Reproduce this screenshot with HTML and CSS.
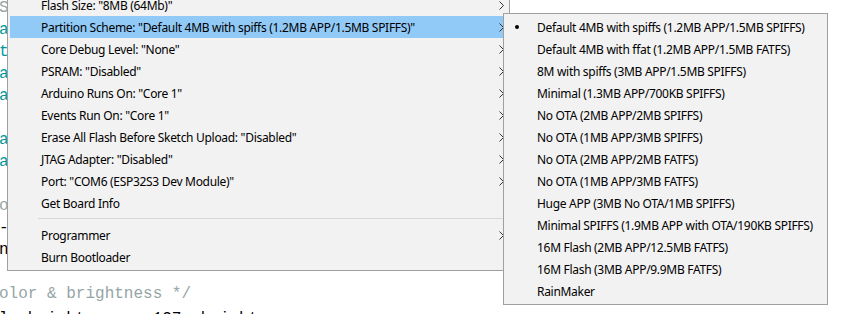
FILE: index.html
```html
<!DOCTYPE html>
<html lang="en">
<head>
  <meta charset="UTF-8" />
  <title>Tools menu - Partition Scheme</title>
  <link rel="stylesheet" href="styles.css">
</head>
<body>
  <!-- sketch editor behind the menus -->
  <div class="editor">
    <div class="ln"><span class="com"> Setup the RGB pins */</span></div>
    <div class="ln"><span class="kw"> analogWrite</span>(RED_PIN, 0);</div>
    <div class="ln"><span class="kw"> tone</span>(BUZZER, 440);</div>
    <div class="ln"><span class="kw"> analogWrite</span>(GREEN_PIN, 0);</div>
    <div class="ln"><span class="kw"> analogWrite</span>(BLUE_PIN, 0);</div>
    <div class="ln"></div>
    <div class="ln"><span class="kw"> analogWrite</span>(RED_PIN, 255);</div>
    <div class="ln"><span class="kw"> analogWrite</span>(GREEN_PIN, 255);</div>
    <div class="ln"></div>
    <div class="ln"><span class="com">color cycle */</span></div>
    <div class="ln">--counter;</div>
    <div class="ln"> n = 0;</div>
    <div class="ln"></div>
    <div class="ln"><span class="com">color &amp; brightness */</span></div>
    <div class="ln last"> l  brightness = 127; brightness</div>
  </div>

  <div class="menu main-menu">
    <div class="item"><span class="label">Flash Size: "8MB (64Mb)"</span><span class="arrow"></span></div>
    <div class="item active"><span class="label">Partition Scheme: "Default 4MB with spiffs (1.2MB APP/1.5MB SPIFFS)"</span><span class="arrow"></span></div>
    <div class="item"><span class="label">Core Debug Level: "None"</span><span class="arrow"></span></div>
    <div class="item"><span class="label">PSRAM: "Disabled"</span><span class="arrow"></span></div>
    <div class="item"><span class="label">Arduino Runs On: "Core 1"</span><span class="arrow"></span></div>
    <div class="item"><span class="label">Events Run On: "Core 1"</span><span class="arrow"></span></div>
    <div class="item"><span class="label">Erase All Flash Before Sketch Upload: "Disabled"</span><span class="arrow"></span></div>
    <div class="item"><span class="label">JTAG Adapter: "Disabled"</span><span class="arrow"></span></div>
    <div class="item"><span class="label">Port: "COM6 (ESP32S3 Dev Module)"</span><span class="arrow"></span></div>
    <div class="item"><span class="label">Get Board Info</span></div>
    <div class="sep"></div>
    <div class="item"><span class="label">Programmer</span><span class="arrow"></span></div>
    <div class="item"><span class="label">Burn Bootloader</span></div>
  </div>

  <div class="menu sub-menu">
    <div class="item checked">Default 4MB with spiffs (1.2MB APP/1.5MB SPIFFS)</div>
    <div class="item">Default 4MB with ffat (1.2MB APP/1.5MB FATFS)</div>
    <div class="item">8M with spiffs (3MB APP/1.5MB SPIFFS)</div>
    <div class="item">Minimal (1.3MB APP/700KB SPIFFS)</div>
    <div class="item">No OTA (2MB APP/2MB SPIFFS)</div>
    <div class="item">No OTA (1MB APP/3MB SPIFFS)</div>
    <div class="item">No OTA (2MB APP/2MB FATFS)</div>
    <div class="item">No OTA (1MB APP/3MB FATFS)</div>
    <div class="item">Huge APP (3MB No OTA/1MB SPIFFS)</div>
    <div class="item">Minimal SPIFFS (1.9MB APP with OTA/190KB SPIFFS)</div>
    <div class="item">16M Flash (2MB APP/12.5MB FATFS)</div>
    <div class="item">16M Flash (3MB APP/9.9MB FATFS)</div>
    <div class="item">RainMaker</div>
  </div>
</body>
</html>
```

FILE: styles.css
```css
:root {
  --menu-bg: #f2f2f2;
  --menu-border: #a0a0a0;
  --menu-hover: #91c9f7;
  --kw: #00979c;
  --comment: #95a5a6;
}

* {
  box-sizing: border-box;
}

body {
  margin: 0;
  width: 845px;
  height: 314px;
  overflow: hidden;
  position: relative;
  background: #fff;
}

/* editor */
.editor {
  margin: -3px 0 0 -10.6px;
  font-family: 'Liberation Mono', monospace;
  font-size: 16px;
  line-height: 22px;
  color: #000;
}
.editor .ln {
  height: 22px;
  white-space: pre;
}
.editor .ln.last {
  margin-top: 3px;
}
.editor .kw {
  color: var(--kw);
}
.editor .com {
  color: var(--comment);
}

/* menus */
.menu {
  position: absolute;
  background: var(--menu-bg);
  border: 1px solid var(--menu-border);
  padding: 2px;
  font-family: 'Noto Sans', sans-serif;
  font-size: 12px;
  letter-spacing: -0.3px;
  color: #000;
  white-space: nowrap;
}
.menu .item {
  height: 22px;
  display: flex;
  align-items: center;
  padding: 0 2px 0 31px;
}
.menu .item .label {
  flex: 1;
}
.menu .item.active {
  background: var(--menu-hover);
}
.menu .arrow {
  width: 6px;
  height: 9px;
  background: url("data:image/svg+xml,%3Csvg xmlns='http://www.w3.org/2000/svg' width='6' height='9'%3E%3Cpolyline points='0.5,0.5 4.5,4.5 0.5,8.5' fill='none' stroke='%23333' stroke-width='1'/%3E%3C/svg%3E") no-repeat;
}
.menu .sep {
  height: 1px;
  margin: 4px 0 5px 28px;
  background: #d7d7d7;
}

.main-menu {
  left: 7px;
  top: -9px;
  width: 503px;
}

.sub-menu {
  left: 503px;
  top: 13px;
  width: 325px;
}
.sub-menu .item {
  position: relative;
}
.sub-menu .item.checked::before {
  content: '';
  position: absolute;
  left: 9px;
  top: 9px;
  width: 4px;
  height: 4px;
  border-radius: 50%;
  background: #000;
}
```
